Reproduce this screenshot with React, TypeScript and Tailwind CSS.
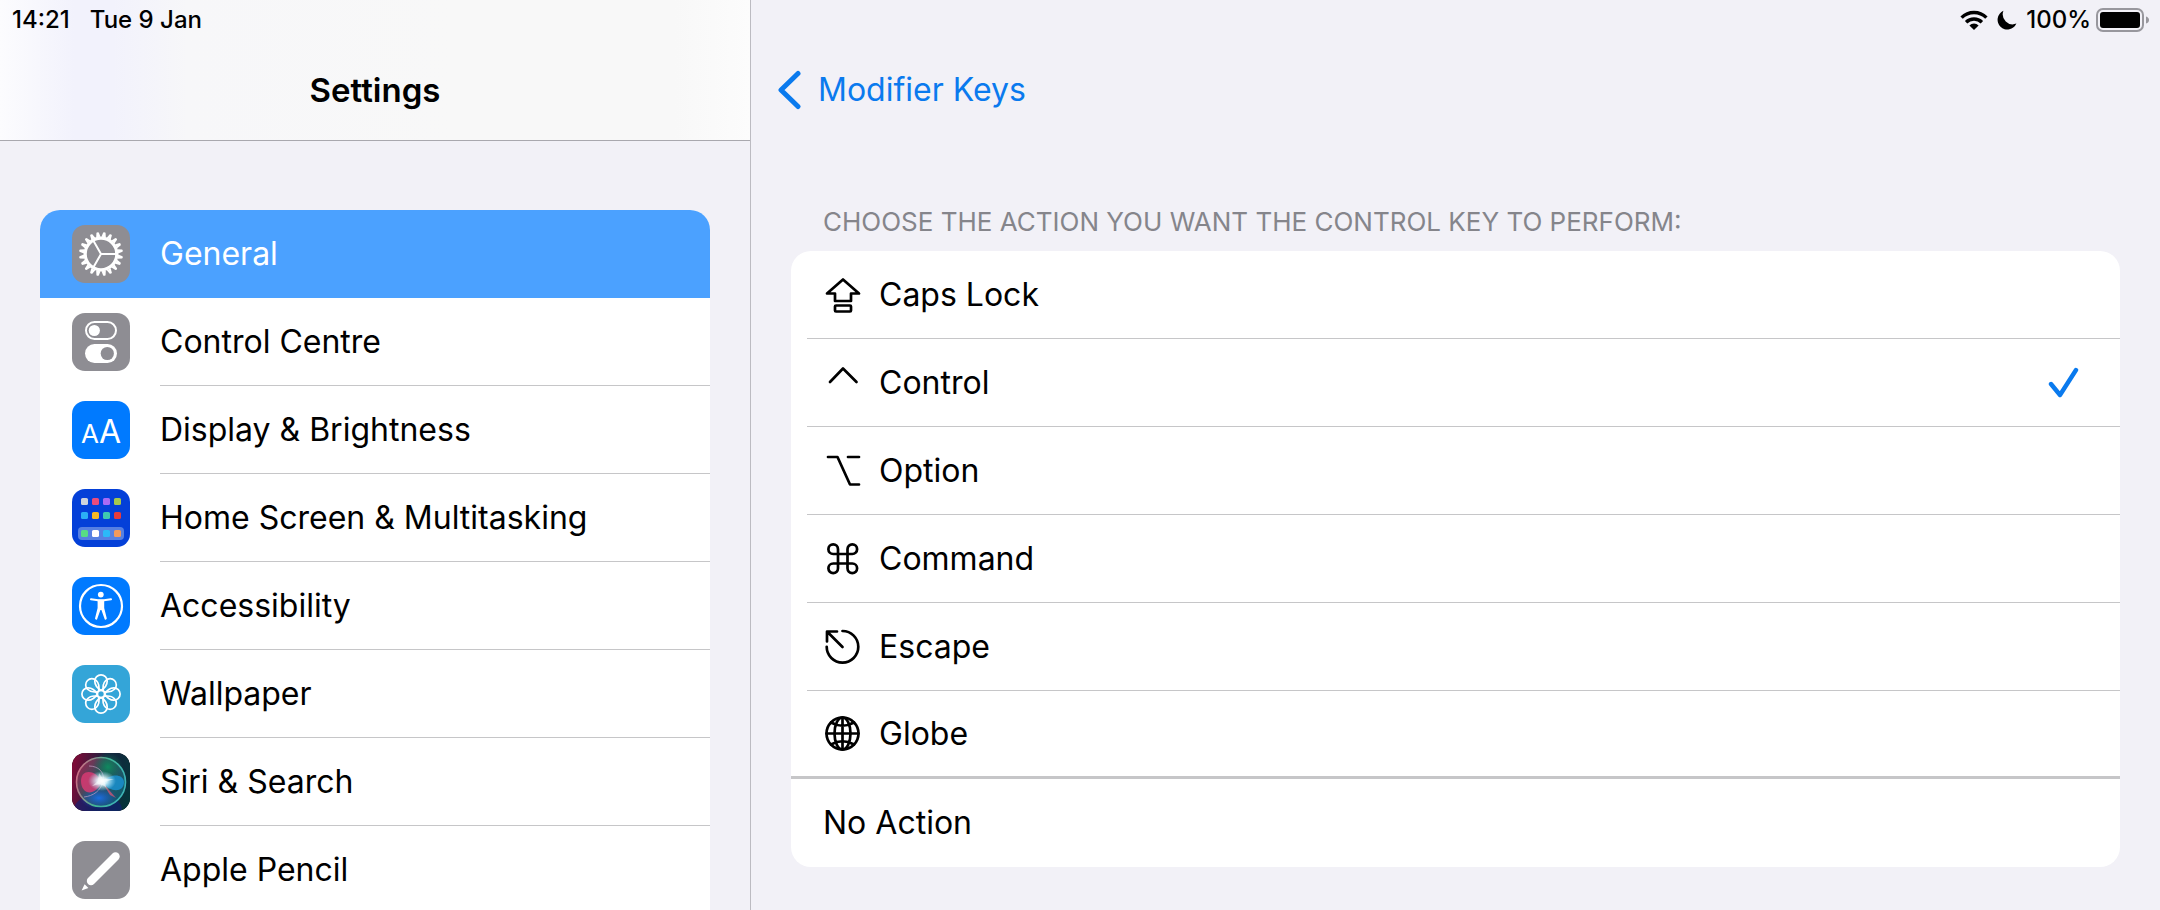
import { useState } from "react";

function GearIcon() {
  const teeth = Array.from({ length: 20 }, (_, i) => i * 18 + 9);
  return (
    <svg viewBox="0 0 58 58" className="size-full">
      <g fill="none" stroke="#fff">
        <circle cx="29" cy="29" r="15.8" strokeWidth="3.2" />
        <path d="M29 29H45M29 29L21 15.1M29 29L21 42.9" strokeWidth="2" />
      </g>
      {teeth.map((angle) => (
        <path key={angle} d="M46 26.8L50.6 27.8Q51.6 29 50.6 30.2L46 31.2Z" fill="#fff" transform={`rotate(${angle} 29 29)`} />
      ))}
    </svg>
  );
}

function TogglesIcon() {
  return (
    <svg viewBox="0 0 58 58" className="size-full">
      <rect x="14" y="9" width="30" height="17" rx="8.5" fill="none" stroke="#fff" strokeWidth="2" />
      <circle cx="22.3" cy="17.5" r="5.6" fill="#fff" />
      <rect x="13" y="31" width="32" height="19" rx="9.5" fill="#fff" />
      <circle cx="35.3" cy="40.5" r="6.6" fill="#8e8d93" />
    </svg>
  );
}

function DisplayIcon() {
  return (
    <span className="flex h-full items-baseline justify-center pt-[13px] leading-9 text-white">
      <span className="text-[26px]">A</span>
      <span className="text-[32px]">A</span>
    </span>
  );
}

const apps = [
  ["#cfd3dc", "#ea4c7d", "#a96bf5", "#a5c94f"],
  ["#2bb0f5", "#f7b924", "#3fc9b0", "#ea3c3c"],
  ["#58dd85", "#ffffff", "#2bb9f8", "#f29a5b"],
];

function HomeScreenIcon() {
  return (
    <svg viewBox="0 0 58 58" className="size-full">
      <rect x="6" y="38" width="46" height="13" rx="4" fill="#5680e2" />
      {apps.map((row, y) =>
        row.map((color, x) => (
          <rect key={color} x={9 + x * 11} y={[9, 23, 41][y]} width="7" height="7" rx="1.6" fill={color} />
        ))
      )}
    </svg>
  );
}

function AccessibilityIcon() {
  return (
    <svg viewBox="0 0 58 58" className="size-full">
      <circle cx="29" cy="29" r="21" fill="none" stroke="#fff" strokeWidth="2.2" />
      <circle cx="28.8" cy="17.6" r="2.9" fill="#fff" />
      <path d="M19 22.3L26 23.3H32L39 22.3" fill="none" stroke="#fff" strokeWidth="2" strokeLinecap="round" />
      <path d="M25.6 22.8H32.2V31L34.8 41.6Q34.2 43.2 32.8 42.4L29.4 33H28.4L25 42.4Q23.6 43.2 23 41.6L25.6 31Z" fill="#fff" />
    </svg>
  );
}

function WallpaperIcon() {
  return (
    <svg viewBox="0 0 58 58" className="size-full">
      <g fill="none" stroke="#fff" strokeWidth="1.7">
        {[0, 45, 90, 135, 180, 225, 270, 315].map((angle) => (
          <path key={angle} d="M29 25.4C25 23 22.8 19.4 22.8 16.1A6.2 6.2 0 0 1 35.2 16.1C35.2 19.4 33 23 29 25.4Z" transform={`rotate(${angle} 29 29)`} />
        ))}
        <circle cx="29" cy="29" r="3.6" />
      </g>
    </svg>
  );
}

function SiriIcon() {
  return (
    <svg viewBox="0 0 58 58" className="size-full">
      <defs>
        <linearGradient id="siri-bg" x1="0" y1="0.4" x2="1" y2="0.6">
          <stop offset="0" stopColor="#7c0b38" />
          <stop offset="0.5" stopColor="#17223f" />
          <stop offset="1" stopColor="#06343a" />
        </linearGradient>
        <linearGradient id="siri-orb" x1="0" y1="0.1" x2="1" y2="0.7">
          <stop offset="0" stopColor="#a81d4d" />
          <stop offset="0.45" stopColor="#36505f" />
          <stop offset="1" stopColor="#0c5a6b" />
        </linearGradient>
        <linearGradient id="siri-rim" x1="0" y1="0" x2="1" y2="0.3">
          <stop offset="0" stopColor="#e75c80" />
          <stop offset="0.6" stopColor="#43b795" />
          <stop offset="1" stopColor="#3db3b4" />
        </linearGradient>
        <radialGradient id="siri-blue">
          <stop offset="0" stopColor="#1a6fe0" />
          <stop offset="1" stopColor="#1a4fc0" stopOpacity="0" />
        </radialGradient>
        <radialGradient id="siri-green">
          <stop offset="0" stopColor="#0f8a5f" />
          <stop offset="1" stopColor="#0b6a50" stopOpacity="0" />
        </radialGradient>
        <radialGradient id="siri-glow">
          <stop offset="0" stopColor="#fff" />
          <stop offset="0.35" stopColor="#eafcff" stopOpacity="0.9" />
          <stop offset="1" stopColor="#9fe8ff" stopOpacity="0" />
        </radialGradient>
      </defs>
      <rect width="58" height="58" fill="url(#siri-bg)" />
      <ellipse cx="26" cy="56" rx="24" ry="14" fill="#10207a" opacity="0.6" />
      <circle cx="29" cy="29" r="24.5" fill="url(#siri-orb)" />
      <circle cx="36" cy="14" r="15" fill="url(#siri-green)" />
      <ellipse cx="27" cy="45" rx="19" ry="11" fill="url(#siri-blue)" />
      <path d="M30 29C22 15 9 17 9 28C9 41 22 45 30 29Z" fill="#e03a74" opacity="0.8" />
      <path d="M30 29C37 21 51 20 52 29C52 40 38 40 30 29Z" fill="#1a93d4" opacity="0.8" />
      <path d="M12 44C21 43 29 38 31 28C33 19 26 13 17 13" fill="none" stroke="#c5a0c8" strokeWidth="1" opacity="0.7" />
      <path d="M30 29L44 45L38 42Z" fill="#e35570" opacity="0.7" />
      <ellipse cx="30" cy="28" rx="14" ry="10" fill="url(#siri-glow)" />
      <path d="M27 20L31 26L42 26L33 29L34 34L28 31L20 33L26 28Z" fill="#fff" opacity="0.5" />
      <circle cx="29" cy="29" r="24.5" fill="none" stroke="url(#siri-rim)" strokeWidth="1.6" />
    </svg>
  );
}

function PencilIcon() {
  return (
    <svg viewBox="0 0 58 58" className="size-full">
      <path d="M19 40L43.5 15.5" stroke="#fff" strokeWidth="8.4" strokeLinecap="round" />
      <path d="M12.6 43.2L16.4 47L9.6 49.6Z" fill="#fff" />
    </svg>
  );
}

const keyIconPaths: Record<string, React.ReactNode> = {
  caps: (
    <>
      <path d="M18 2.5L34 16.5H26V24H10V16.5H2Z" />
      <rect x="10" y="28.5" width="16" height="6" rx="1" />
    </>
  ),
  control: <path d="M5 17L18 3.5L31.5 17" />,
  option: <path d="M3 4H12.5L25 31.5H34M23 4H34" />,
  command: (
    <path d="M13 13H22.5V22.5H13ZM13 13V8.2A4.8 4.8 0 1 0 8.2 13H13M22.5 13H27.3A4.8 4.8 0 1 0 22.5 8.2V13M22.5 22.5V27.3A4.8 4.8 0 1 0 27.3 22.5H22.5M13 22.5H8.2A4.8 4.8 0 1 0 13 27.3V22.5" />
  ),
  escape: (
    <>
      <path d="M17.5 2A15.8 15.8 0 1 1 1.7 17.8" />
      <path d="M17.5 18L2.5 3M2 12.5V2.5H12" />
    </>
  ),
  globe: (
    <>
      <circle cx="17.5" cy="17.5" r="16" />
      <path d="M17.5 1.5V33.5M1.5 17.5H33.5M6 6.5Q17.5 13 29 6.5M6 28.5Q17.5 22 29 28.5" />
      <ellipse cx="17.5" cy="17.5" rx="8" ry="16" />
    </>
  ),
};

function KeyIcon({ name }: { name: string }) {
  return (
    <svg viewBox="0 0 36 36" className="size-9 shrink-0" fill="none" stroke="#000" strokeWidth="2.7" strokeLinecap="round" strokeLinejoin="round">
      {keyIconPaths[name]}
    </svg>
  );
}

const sections = [
  { label: "General", icon: <GearIcon />, color: "bg-[#8e8d93]" },
  { label: "Control Centre", icon: <TogglesIcon />, color: "bg-[#8e8d93]" },
  { label: "Display & Brightness", icon: <DisplayIcon />, color: "bg-[#007aff]" },
  { label: "Home Screen & Multitasking", icon: <HomeScreenIcon />, color: "bg-[#0440d8]" },
  { label: "Accessibility", icon: <AccessibilityIcon />, color: "bg-[#007aff]" },
  { label: "Wallpaper", icon: <WallpaperIcon />, color: "bg-[#34a5d8]" },
  { label: "Siri & Search", icon: <SiriIcon />, color: "bg-black" },
  { label: "Apple Pencil", icon: <PencilIcon />, color: "bg-[#8e8d93]" },
];

const actions = [
  { label: "Caps Lock", icon: "caps" },
  { label: "Control", icon: "control" },
  { label: "Option", icon: "option" },
  { label: "Command", icon: "command" },
  { label: "Escape", icon: "escape" },
  { label: "Globe", icon: "globe" },
];

function Checkmark() {
  return (
    <svg viewBox="0 0 32 32" className="size-8" fill="none" stroke="#0a7aee" strokeWidth="4.4" strokeLinecap="round" strokeLinejoin="round">
      <path d="M3 17L12 28L28 3" />
    </svg>
  );
}

function StatusIcons() {
  return (
    <div className="flex h-10 items-center justify-end pr-[10px]">
      <svg viewBox="0 0 28 20" className="h-5 w-7">
        <g fill="none" stroke="#000" strokeWidth="3.4">
          <path d="M1.6 7.6A17.6 17.6 0 0 1 26.4 7.6" />
          <path d="M6.1 12.2A11.2 11.2 0 0 1 21.9 12.2" />
        </g>
        <path d="M14 20L9.4 15.4A6.6 6.6 0 0 1 18.6 15.4Z" />
      </svg>
      <svg viewBox="0 0 20 20" className="ml-[9px] size-5">
        <path d="M6.4 0.8A9.8 9.8 0 1 0 19.4 13.6A10 10 0 0 1 6.4 0.8Z" />
      </svg>
      <span className="ml-[9px] text-2xl font-medium">100%</span>
      <svg viewBox="0 0 54 24" className="ml-[5px] h-6 w-[54px]">
        <rect x="1" y="1" width="46" height="22" rx="6" fill="none" stroke="#98979d" strokeWidth="2" />
        <rect x="4" y="4" width="40" height="16" rx="3" />
        <path d="M50 8.5Q53 9.5 53 12T50 15.5Z" fill="#98979d" />
      </svg>
    </div>
  );
}

function Sidebar() {
  return (
    <aside className="flex w-[751px] shrink-0 flex-col border-r border-[#bcbbc1]">
      <header className="h-[141px] shrink-0 border-b border-[#a9a8ae] bg-[linear-gradient(90deg,#fcfcfe_0%,#f2f2fc_10%,#f2f2fc_15%,#f7f7f9_25%,#f8f8f8_60%,#f8f8f8_90%,#fcfcfc_100%)]">
        <div className="flex h-10 items-center gap-5 pl-3 text-2xl font-medium">
          <span>14:21</span>
          <span>Tue 9 Jan</span>
        </div>
        <h1 className="pt-[26px] text-center text-[33px] leading-[48px] font-semibold">Settings</h1>
      </header>
      <nav className="min-h-0 flex-1 overflow-hidden px-10 pt-[69px]">
        <ul className="overflow-hidden rounded-t-[20px] bg-white">
          {sections.map((section, i) => (
            <li key={section.label}>
              <a href="#" className={`flex h-22 items-center pl-8 ${i === 0 ? "bg-[#4ba1ff] text-white" : ""}`}>
                <span className={`size-[58px] shrink-0 overflow-hidden rounded-[13px] ${section.color}`}>{section.icon}</span>
                <span className={`ml-[30px] flex h-full flex-1 items-center ${i === 0 ? "" : "border-b border-[#c6c6c8]"}`}>
                  {section.label}
                </span>
              </a>
            </li>
          ))}
        </ul>
      </nav>
    </aside>
  );
}

export default function App() {
  const [selected, setSelected] = useState("Control");

  return (
    <div className="flex h-screen overflow-hidden bg-[#f2f1f7] font-['Inter',sans-serif] text-[32px] leading-10 text-black">
      <Sidebar />
      <main className="min-w-0 flex-1">
        <StatusIcons />
        <button type="button" className="ml-[25px] flex h-[100px] items-center text-[#0a7aee]">
          <svg viewBox="0 0 26 40" className="h-10 w-[26px]" fill="none" stroke="currentColor" strokeWidth="5" strokeLinecap="round" strokeLinejoin="round">
            <path d="M22 3.5L5 20L22 36.5" />
          </svg>
          <span className="ml-4">Modifier Keys</span>
        </button>
        <fieldset aria-labelledby="action-title" className="px-10 pt-[62px]">
          <p id="action-title" className="pb-[9px] pl-8 text-[26px] text-[#85858b] uppercase">
            Choose the action you want the Control key to perform:
          </p>
          <div className="overflow-hidden rounded-[20px] bg-white">
            {actions.map(({ label, icon }, i) => (
              <label
                key={label}
                className={`flex h-22 cursor-pointer items-center pr-10 ${i === actions.length - 1 ? "border-b-[3px] border-[#c6c6c8] pl-[34px]" : "ml-4 border-b border-[#c6c6c8] pl-[18px]"}`}
              >
                <input type="radio" name="action" className="sr-only" checked={selected === label} onChange={() => setSelected(label)} />
                <KeyIcon name={icon} />
                <span className="ml-[18px] flex-1">{label}</span>
                {selected === label && <Checkmark />}
              </label>
            ))}
            <label className="flex h-22 cursor-pointer items-center pr-10 pl-8">
              <input type="radio" name="action" className="sr-only" checked={selected === "No Action"} onChange={() => setSelected("No Action")} />
              <span className="flex-1">No Action</span>
              {selected === "No Action" && <Checkmark />}
            </label>
          </div>
        </fieldset>
      </main>
    </div>
  );
}
